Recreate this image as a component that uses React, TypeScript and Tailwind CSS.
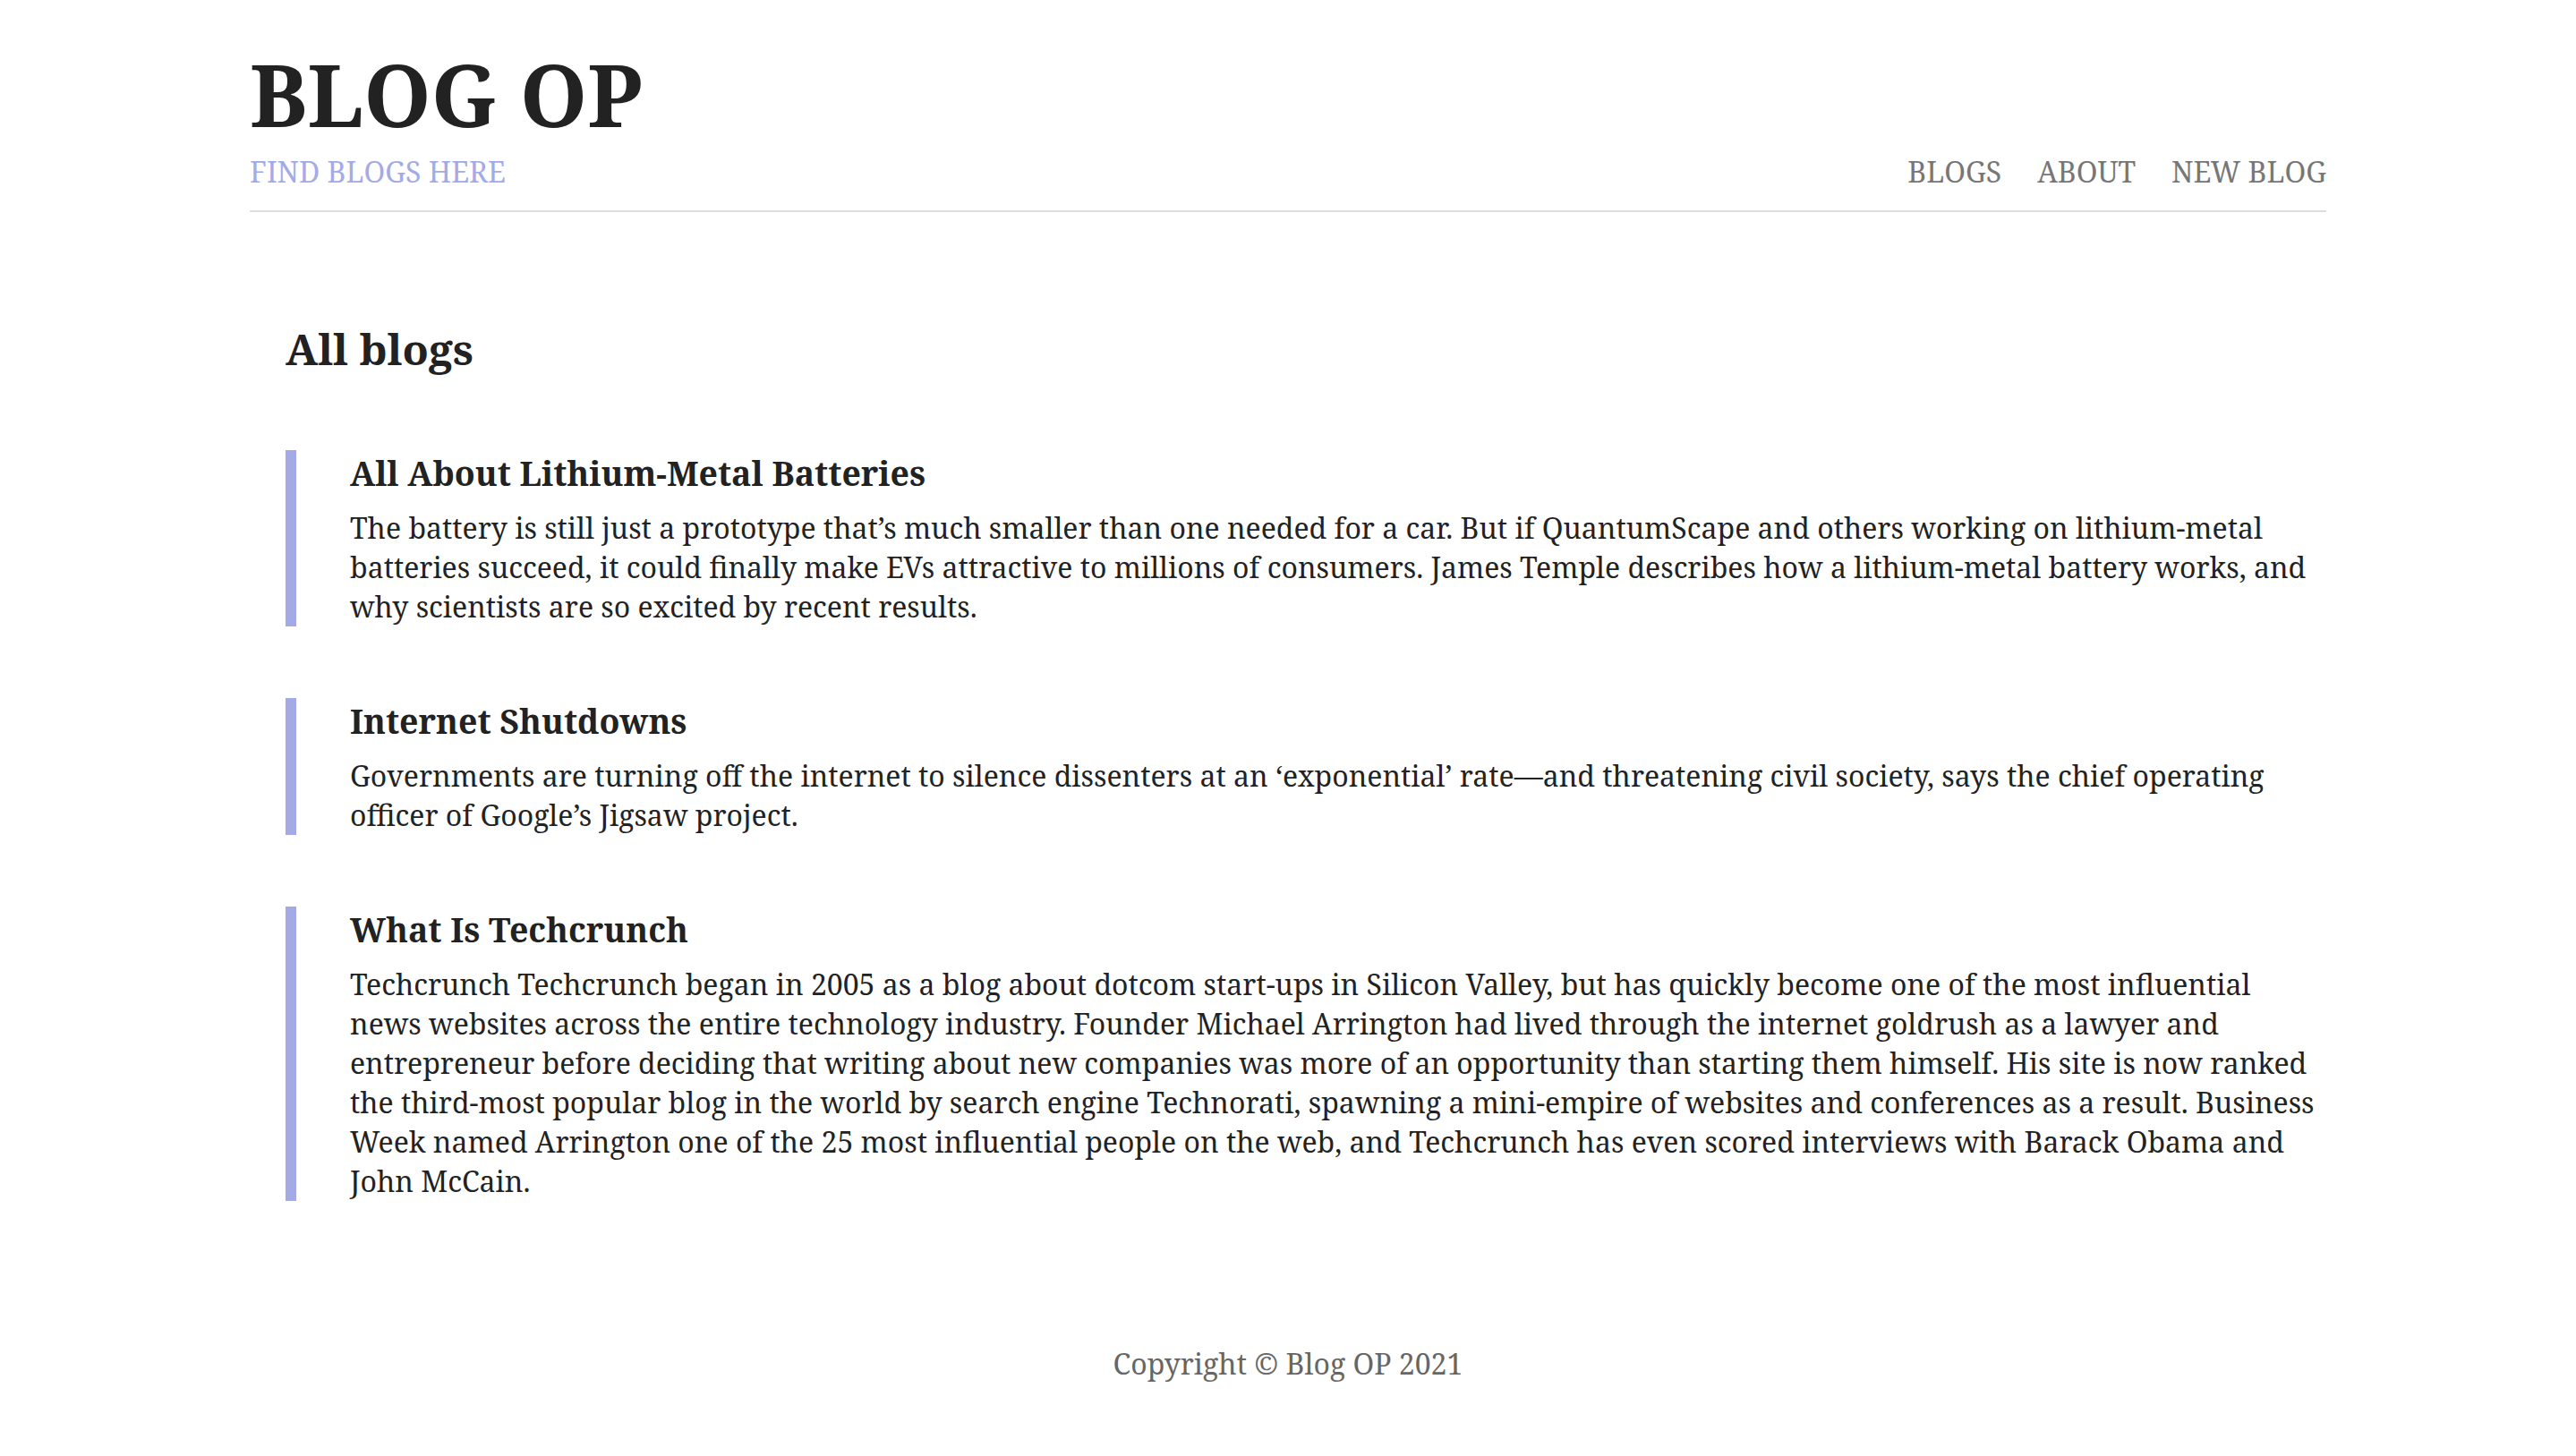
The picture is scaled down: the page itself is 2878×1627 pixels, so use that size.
import React from "react";

const blogs = [
  {
    title: "All About Lithium-Metal Batteries",
    body: "The battery is still just a prototype that’s much smaller than one needed for a car. But if QuantumScape and others working on lithium-metal batteries succeed, it could finally make EVs attractive to millions of consumers. James Temple describes how a lithium-metal battery works, and why scientists are so excited by recent results.",
  },
  {
    title: "Internet Shutdowns",
    body: "Governments are turning off the internet to silence dissenters at an ‘exponential’ rate—and threatening civil society, says the chief operating officer of Google’s Jigsaw project.",
  },
  {
    title: "What Is Techcrunch",
    body: "Techcrunch Techcrunch began in 2005 as a blog about dotcom start-ups in Silicon Valley, but has quickly become one of the most influential news websites across the entire technology industry. Founder Michael Arrington had lived through the internet goldrush as a lawyer and entrepreneur before deciding that writing about new companies was more of an opportunity than starting them himself. His site is now ranked the third-most popular blog in the world by search engine Technorati, spawning a mini-empire of websites and conferences as a result. Business Week named Arrington one of the 25 most influential people on the web, and Techcrunch has even scored interviews with Barack Obama and John McCain.",
  },
];

export default function App() {
  return (
    <div
      className="min-h-screen bg-white text-[#222222]"
      style={{ fontFamily: '"Noto Serif", "DejaVu Serif", serif' }}
    >
      <div className="mx-auto w-[2320px]">
        <header className="pt-[39px] pb-[21px] border-b-2 border-[#dddddd] flex items-end justify-between">
          <div>
            <h1 className="text-[96px] font-bold leading-[131px]">BLOG OP</h1>
            <p className="text-[32px] leading-[44px] text-[#a4aae8]">FIND BLOGS HERE</p>
          </div>
          <nav className="flex gap-[40px] text-[32px] leading-[44px] text-[#777777]">
            <a>BLOGS</a>
            <a>ABOUT</a>
            <a>NEW BLOG</a>
          </nav>
        </header>
        <main className="pl-[40px] pt-[120px]">
          <h2 className="text-[48px] font-bold leading-[65px]">All blogs</h2>
          <div className="mt-[81px] flex flex-col gap-[80px]">
            {blogs.map((b) => (
              <article key={b.title} className="border-l-[12px] border-[#a4aae6] pl-[60px]">
                <h3 className="text-[37.44px] font-bold leading-[51px]">{b.title}</h3>
                <p className="mt-[14px] text-[32px] leading-[44px]">{b.body}</p>
              </article>
            ))}
          </div>
        </main>
        <footer className="mt-[160px] pb-[60px] text-center text-[32px] leading-[44px] text-[#666666]">
          Copyright © Blog OP 2021
        </footer>
      </div>
    </div>
  );
}
